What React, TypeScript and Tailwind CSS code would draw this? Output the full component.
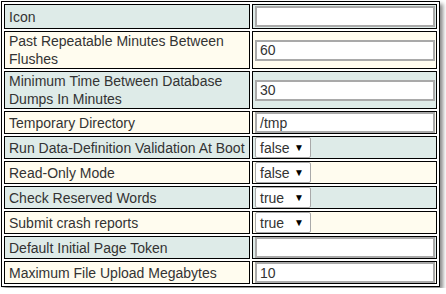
import React from 'react'

type Row = { label: string; kind: 'text' | 'select'; value: string }

const rows: Row[] = [
  { label: 'Icon', kind: 'text', value: '' },
  { label: 'Past Repeatable Minutes Between Flushes', kind: 'text', value: '60' },
  { label: 'Minimum Time Between Database Dumps In Minutes', kind: 'text', value: '30' },
  { label: 'Temporary Directory', kind: 'text', value: '/tmp' },
  { label: 'Run Data-Definition Validation At Boot', kind: 'select', value: 'false' },
  { label: 'Read-Only Mode', kind: 'select', value: 'false' },
  { label: 'Check Reserved Words', kind: 'select', value: 'true' },
  { label: 'Submit crash reports', kind: 'select', value: 'true' },
  { label: 'Default Initial Page Token', kind: 'text', value: '' },
  { label: 'Maximum File Upload Megabytes', kind: 'text', value: '10' },
]

function Field({ row }: { row: Row }) {
  if (row.kind === 'select') {
    return (
      <div className="flex h-[21px] w-[56px] items-center justify-between rounded-[2px] border border-[#a9a9a9] bg-white pl-[4px] pr-[6px] text-[14px] leading-none text-[#333]">
        <span>{row.value}</span>
        <span className="text-[10px] text-black">▼</span>
      </div>
    )
  }
  return (
    <div className="flex h-[21px] w-[180px] items-center border-2 border-[#a9a9a9] bg-white pl-[3px] text-[14px] leading-none text-[#333]">
      {row.value}
    </div>
  )
}

export default function App() {
  return (
    <div className="bg-white p-px font-['Liberation_Sans',Arial,sans-serif]">
      <table className="border-separate border-spacing-[2px] border border-black shadow-[3px_3px_4px_#8a8a8a]">
        <tbody>
          {rows.map((row, i) => {
            const bg = i % 2 === 0 ? 'bg-[#deebe8]' : 'bg-[#fffcef]'
            return (
              <tr key={i} className={i === 0 ? 'h-[25px]' : 'h-[23px]'}>
                <td className={`${bg} w-[246px] border border-black px-[4px] py-0 align-middle text-[14px] leading-[18px] text-[#333]`}>
                  {row.label}
                </td>
                <td className={`${bg} w-[185px] border border-black py-0 pl-[2px] pr-px align-middle`}>
                  <Field row={row} />
                </td>
              </tr>
            )
          })}
        </tbody>
      </table>
    </div>
  )
}
